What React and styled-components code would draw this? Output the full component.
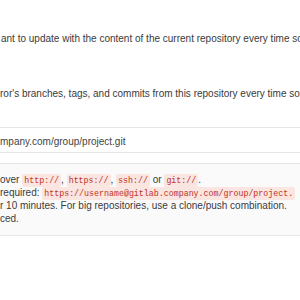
import React from "react";
import styled, { createGlobalStyle } from "styled-components";

const Global = createGlobalStyle`
  html, body { margin: 0; padding: 0; background: #fff; }
  body { width: 300px; height: 300px; overflow: hidden; }
`;

const Page = styled.div`
  width: 300px;
  height: 300px;
  overflow: hidden;
  font-family: "Liberation Sans", Arial, sans-serif;
  font-size: 10px;
  line-height: 13px;
  color: #3a3a3a;
  padding-top: 32px;
  box-sizing: border-box;
`;

const Help = styled.p`
  margin: 0 0 ${(p) => p.$gap}px 0;
  padding-left: ${(p) => p.$indent || 0}px;
  white-space: nowrap;
`;

const Input = styled.div`
  margin: 0 -10px 0 -10px;
  height: 21px;
  border-top: 1px solid #e6e6e6;
  border-bottom: 1px solid #e6e6e6;
  background: #fff;
  padding: 3px 0 0 10px;
  display: flex;
  align-items: center;
  color: #444;
  white-space: nowrap;
`;

const InfoBox = styled.div`
  margin: 10px -10px 0 -10px;
  padding: 9px 0 10px 10px;
  background: #fafafa;
  border-top: 1px solid #e6e6e6;
  border-bottom: 1px solid #e6e6e6;
`;

const Line = styled.div`
  white-space: nowrap;
  height: 13px;
`;

const Code = styled.code`
  font-family: "Liberation Mono", "DejaVu Sans Mono", monospace;
  font-size: 8.3px;
  color: #c0341d;
  background: #fbe5e1;
  padding: 2px 2px;
  border-radius: 2px;
`;

export default function App() {
  return (
    <>
      <Global />
      <Page>
        <Help $gap={42} $indent={1}>
          ant to update with the content of the current repository every time so
        </Help>
        <Help $gap={27}>
          ror's branches, tags, and commits from this repository every time sor
        </Help>
        <Input>mpany.com/group/project.git</Input>
        <InfoBox>
          <Line>
            over <Code>http://</Code>, <Code>https://</Code>, <Code>ssh://</Code> or <Code>git://</Code>.
          </Line>
          <Line>
            required: <Code>https://username@gitlab.company.com/group/project.</Code>
          </Line>
          <Line>r 10 minutes. For big repositories, use a clone/push combination.</Line>
          <Line>ced.</Line>
        </InfoBox>
      </Page>
    </>
  );
}
